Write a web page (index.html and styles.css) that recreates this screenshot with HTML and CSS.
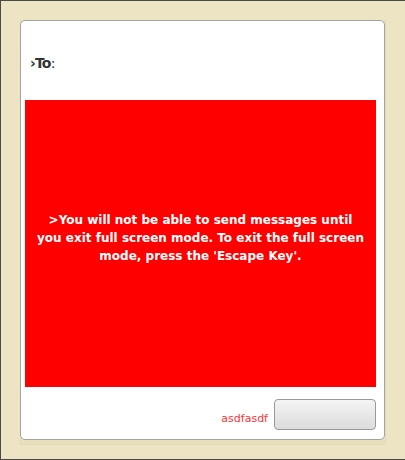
FILE: index.html
```html
<!DOCTYPE html>
<html>
<head>
<meta charset="utf-8">
<link rel="stylesheet" href="styles.css">
</head>
<body>
<div class="frame">
  <div class="shadow-box">
    <div class="card">
      <div class="to-row"><span class="to-label"><b>›To</b>:</span></div>
      <div class="notice">
        <p>&gt;You will not be able to send messages until you exit full screen mode. To exit the full screen mode, press the 'Escape Key'.</p>
      </div>
      <div class="actions">
        <span class="status">asdfasdf</span>
        <button class="send" type="button"></button>
      </div>
    </div>
  </div>
</div>
</body>
</html>
```

FILE: styles.css
```css
html, body {
  margin: 0;
  padding: 0;
  background: #ece4c3;
}
.frame {
  box-sizing: border-box;
  width: 406px;
  height: 460px;
  border: 1px solid #4a4a4a;
  background: #ece4c3;
  padding: 19px 0 0 19px;
}
.shadow-box {
  width: 366px;
  height: 425px;
  box-sizing: border-box;
  border-right: 1px solid #e2d9b7;
  border-bottom: 1px solid #e2d9b7;
  border-left: 1px solid #e2d9b7;
  border-radius: 0 0 2px 2px;
  background: #e8dfbd;
}
.card {
  box-sizing: border-box;
  width: 365px;
  height: 420px;
  margin-left: -1px;
  background: #fff;
  border: 1px solid #a3a3a3;
  border-radius: 5px;
  padding: 0 8px 0 4px;
  display: flex;
  flex-direction: column;
}
.to-row {
  height: 79px;
  display: flex;
  align-items: center;
  padding: 4px 0 0 5px;
  box-sizing: border-box;
  font-family: "DejaVu Sans", Verdana, sans-serif;
  font-size: 14px;
  color: #333;
}
.to-label b {
  font-weight: 900;
  letter-spacing: -0.8px;
}
.notice {
  height: 287px;
  background: #ff0000;
  display: flex;
  align-items: center;
  justify-content: center;
  padding: 0 11px 12px;
  box-sizing: border-box;
}
.notice p {
  margin: 0;
  text-align: center;
  color: #fff;
  font-family: "DejaVu Sans", Verdana, sans-serif;
  font-weight: bold;
  font-size: 12px;
  line-height: 18px;
}
.actions {
  display: flex;
  justify-content: flex-end;
  align-items: center;
  gap: 6px;
  margin-top: 12px;
}
.status {
  color: #ff3333;
  font-family: "DejaVu Sans", Verdana, sans-serif;
  font-size: 11px;
  padding-top: 8px;
}
.send {
  width: 102px;
  height: 31px;
  border: 1px solid #9a9a9a;
  border-radius: 4px;
  background: linear-gradient(#f4f4f4, #dcdcdc);
  padding: 0;
}
```
